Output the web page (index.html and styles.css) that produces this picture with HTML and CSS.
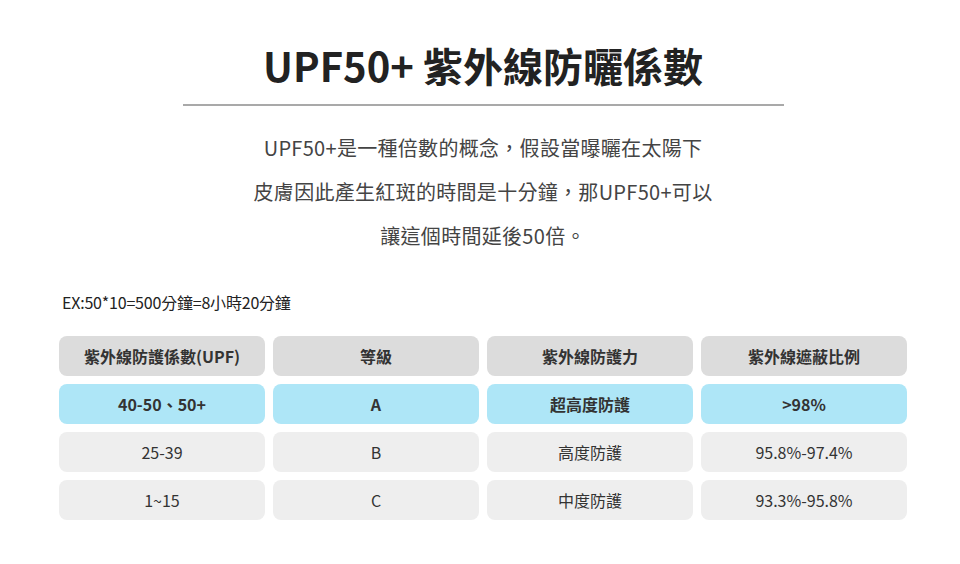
FILE: index.html
```html
<!DOCTYPE html>
<html lang="zh-Hant">
<head>
<meta charset="utf-8">
<link rel="stylesheet" href="styles.css">
</head>
<body>
<div class="page">
  <h1 class="title">UPF50+ 紫外線防曬係數</h1>
  <hr class="rule">
  <div class="intro">
    <p>UPF50+是一種倍數的概念，假設當曝曬在太陽下</p>
    <p>皮膚因此產生紅斑的時間是十分鐘，那UPF50+可以</p>
    <p>讓這個時間延後50倍。</p>
  </div>
  <p class="example">EX:50*10=500分鐘=8小時20分鐘</p>
  <div class="table">
    <div class="cell head">紫外線防護係數(UPF)</div>
    <div class="cell head">等級</div>
    <div class="cell head">紫外線防護力</div>
    <div class="cell head">紫外線遮蔽比例</div>

    <div class="cell hi">40-50、50+</div>
    <div class="cell hi">A</div>
    <div class="cell hi">超高度防護</div>
    <div class="cell hi">&gt;98%</div>

    <div class="cell">25-39</div>
    <div class="cell">B</div>
    <div class="cell">高度防護</div>
    <div class="cell">95.8%-97.4%</div>

    <div class="cell">1~15</div>
    <div class="cell">C</div>
    <div class="cell">中度防護</div>
    <div class="cell">93.3%-95.8%</div>
  </div>
</div>
</body>
</html>
```

FILE: styles.css
```css
html, body {
  margin: 0;
  padding: 0;
  background: #ffffff;
}
body {
  font-family: "Noto Sans CJK TC", "Noto Sans", sans-serif;
  color: #333333;
}
.page {
  width: 848px;
  margin-left: 59px;
  padding-top: 39px;
}
.title {
  margin: 0;
  text-align: center;
  font-size: 40px;
  line-height: 52px;
  font-weight: 700;
  color: #222222;
}
.rule {
  width: 601px;
  margin: 13px auto 0;
  border: 0;
  height: 2px;
  background: #a9a9a9;
}
.intro {
  margin-top: 20px;
  text-align: center;
  font-size: 20px;
  color: #444444;
  letter-spacing: 0.3px;
}
.intro p {
  margin: 0;
  line-height: 44px;
}
.example {
  margin: 33px 0 0 3px;
  font-size: 16px;
  line-height: 22px;
  color: #222222;
  letter-spacing: -0.2px;
}
.table {
  margin-top: 23px;
  display: grid;
  grid-template-columns: repeat(4, 1fr);
  column-gap: 8px;
  row-gap: 8px;
}
.cell {
  height: 40px;
  border-radius: 8px;
  background: #eeeeee;
  display: flex;
  align-items: center;
  justify-content: center;
  font-size: 16px;
  color: #333333;
}
.cell.head {
  background: #dcdcdc;
  font-weight: 700;
}
.cell.hi {
  background: #aee6f7;
  font-weight: 700;
}
```
